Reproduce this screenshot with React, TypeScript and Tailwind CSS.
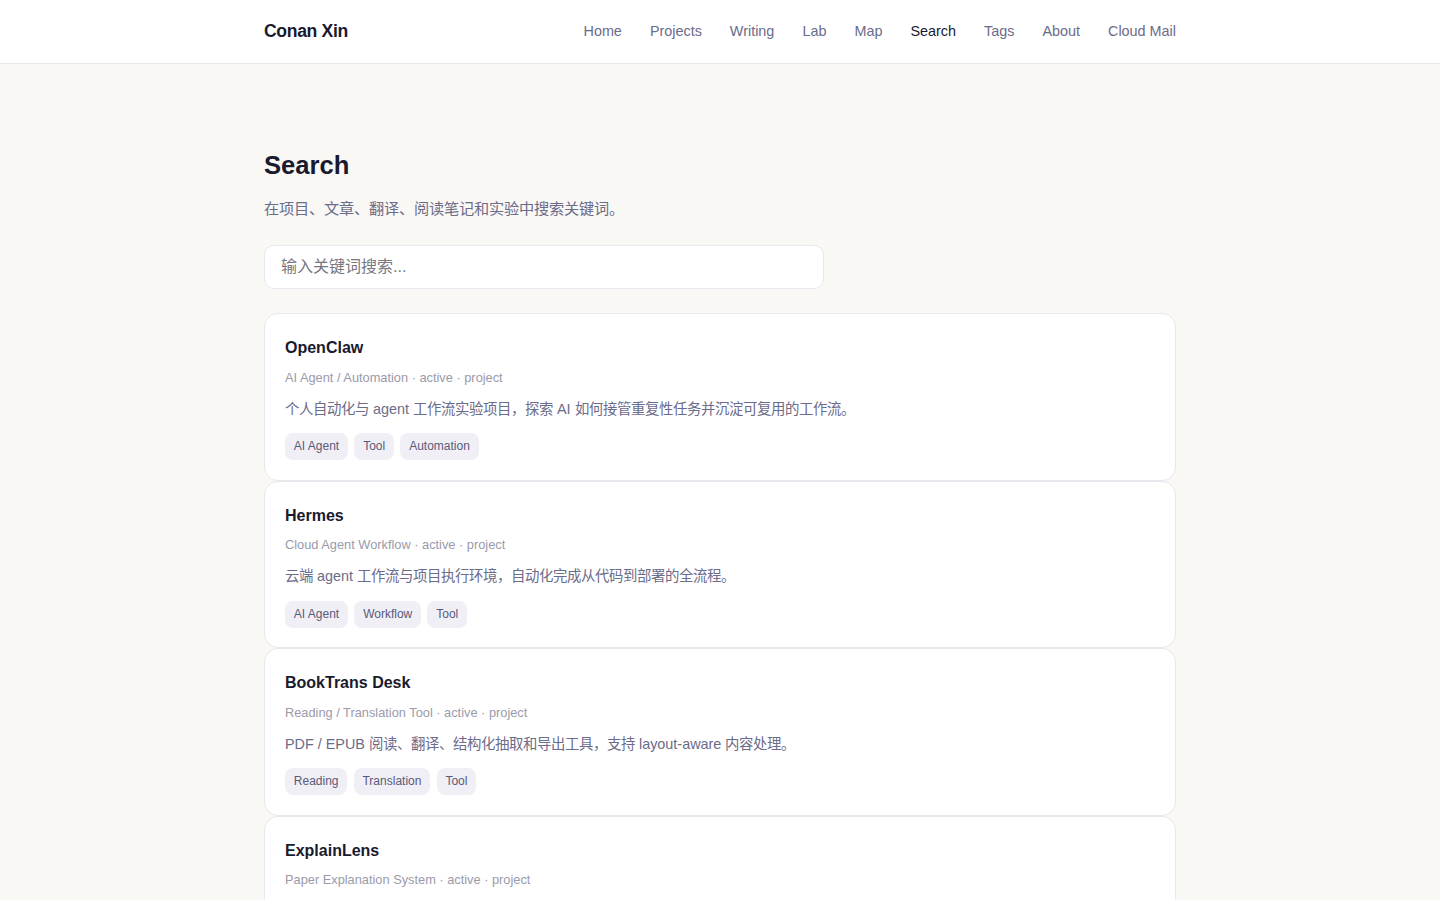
const navLinks = ['Home', 'Projects', 'Writing', 'Lab', 'Map', 'Search', 'Tags', 'About', 'Cloud Mail'];

const results = [
    {
        title: 'OpenClaw',
        meta: 'AI Agent / Automation · active · project',
        desc: '个人自动化与 agent 工作流实验项目，探索 AI 如何接管重复性任务并沉淀可复用的工作流。',
        tags: ['AI Agent', 'Tool', 'Automation'],
    },
    {
        title: 'Hermes',
        meta: 'Cloud Agent Workflow · active · project',
        desc: '云端 agent 工作流与项目执行环境，自动化完成从代码到部署的全流程。',
        tags: ['AI Agent', 'Workflow', 'Tool'],
    },
    {
        title: 'BookTrans Desk',
        meta: 'Reading / Translation Tool · active · project',
        desc: 'PDF / EPUB 阅读、翻译、结构化抽取和导出工具，支持 layout-aware 内容处理。',
        tags: ['Reading', 'Translation', 'Tool'],
    },
    {
        title: 'ExplainLens',
        meta: 'Paper Explanation System · active · project',
        desc: '',
        tags: [],
    },
];

export default function App() {
    return (
        <div lang="zh-CN" className="h-[900px] overflow-hidden bg-[#f9f8f5] font-['Liberation_Sans',sans-serif] text-[#1a1a2e]">
            <header className="h-16 border-b border-[#e8e8ee] bg-white">
                <div className="mx-auto flex h-full max-w-[960px] items-center justify-between px-6">
                    <span className="text-[17.6px] font-bold tracking-[-0.352px]">Conan Xin</span>
                    <nav className="flex gap-7">
                        {navLinks.map((link) => (
                            <a key={link} className={`text-[14.4px] ${link === 'Search' ? 'text-[#1a1a2e]' : 'text-[#6b6b8a]'}`}>
                                {link}
                            </a>
                        ))}
                    </nav>
                </div>
            </header>
            <main className="mx-auto max-w-[960px] px-6 pt-[84px]">
                <h1 className="text-[25.6px] leading-[35px] font-bold">Search</h1>
                <p className="mt-[14px] text-[15.2px] leading-[24px] text-[#6b6b8a]">在项目、文章、翻译、阅读笔记和实验中搜索关键词。</p>
                <input
                    placeholder="输入关键词搜索..."
                    className="mt-6 block h-11 w-[560px] rounded-[10px] border border-[#e8e8ee] bg-white px-4 text-base outline-none placeholder:text-[#77777f]"
                />
                <div className="mt-6 flex flex-col">
                    {results.map((item) => (
                        <article key={item.title} className="h-[167.5px] shrink-0 rounded-[14px] border border-[#e8e8ee] bg-white p-5">
                            <h3 className="text-base leading-[28px] font-bold">{item.title}</h3>
                            <p className="mt-[5.75px] text-[12.8px] leading-[20px] text-[#9a9aab]">{item.meta}</p>
                            <p className="mt-[10px] text-[14.4px] leading-[23px] text-[#6b6b8a]">{item.desc}</p>
                            <div className="mt-[12.25px] flex gap-[6.4px]">
                                {item.tags.map((tag) => (
                                    <span key={tag} className="rounded-lg bg-[#f0eff5] px-[8.8px] py-[6px] text-xs leading-[15px] text-[#5a5a7a]">
                                        {tag}
                                    </span>
                                ))}
                            </div>
                        </article>
                    ))}
                </div>
            </main>
        </div>
    );
}
